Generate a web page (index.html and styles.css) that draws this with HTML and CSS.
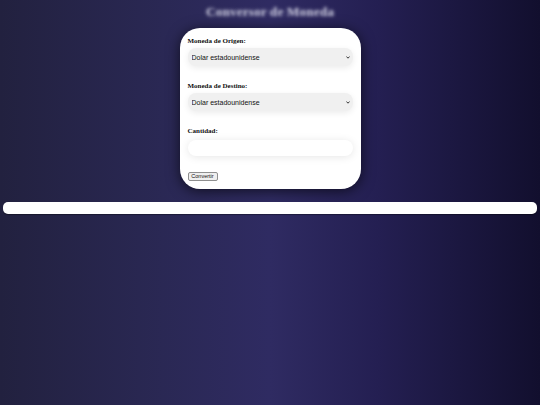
FILE: index.html
```
<!DOCTYPE html>
<html lang="es">
<head>
<meta charset="utf-8">
<title>Conversor de Moneda</title>
<link rel="stylesheet" href="styles.css">
</head>
<body>
<h1 class="title">Conversor de Moneda</h1>
<div class="card">
  <label class="label" for="origen">Moneda de Origen:</label>
  <div class="select-wrap">
    <select class="select" id="origen"><option>Dolar estadounidense</option></select>
    <svg class="chevron" width="4" height="3" viewBox="0 0 4 3"><path d="M0.4 0.5 L2 2.2 L3.6 0.5" fill="none" stroke="#222" stroke-width="0.9"/></svg>
  </div>
  <label class="label label-gap" for="destino">Moneda de Destino:</label>
  <div class="select-wrap">
    <select class="select" id="destino"><option>Dolar estadounidense</option></select>
    <svg class="chevron" width="4" height="3" viewBox="0 0 4 3"><path d="M0.4 0.5 L2 2.2 L3.6 0.5" fill="none" stroke="#222" stroke-width="0.9"/></svg>
  </div>
  <label class="label label-gap" for="cantidad">Cantidad:</label>
  <input class="input" id="cantidad" type="text">
  <button class="button" type="button">Convertir</button>
</div>
<div class="result"></div>
</body>
</html>
```
FILE: styles.css
```
html {
  min-height: 100%;
  background: linear-gradient(to right, #22213f 0%, #2a2854 30%, #2f2b62 50%, #241f52 70%, #120f2e 100%);
}
body {
  margin: 0 3px;
  min-height: 405px;
  display: flex;
  flex-direction: column;
}
.title {
  margin: 3px 0 0;
  height: 22px;
  font-family: "Liberation Serif", serif;
  font-size: 13.5px;
  font-weight: bold;
  line-height: 18px;
  text-align: center;
  color: transparent;
  text-shadow: 0 0 3.5px rgba(225, 225, 240, 0.95);
}
.card {
  align-self: center;
  width: 181px;
  box-sizing: border-box;
  margin-top: 3px;
  padding: 8px;
  background: #fff;
  border-radius: 20px;
  box-shadow: 0 2px 14px rgba(0, 0, 0, 0.65);
  display: flex;
  flex-direction: column;
  align-items: flex-start;
}
.label {
  font-family: "Liberation Serif", serif;
  font-size: 7px;
  font-weight: bold;
  line-height: 10px;
  color: #111;
}
.label-gap {
  margin-top: 15px;
}
.select-wrap {
  position: relative;
  margin-top: 2px;
  width: 165px;
  height: 18px;
}
.select {
  appearance: none;
  -webkit-appearance: none;
  display: block;
  width: 100%;
  height: 100%;
  margin: 0;
  border: none;
  border-radius: 8px;
  background: #f0f0f0;
  box-shadow: 0 2px 6px rgba(0, 0, 0, 0.08);
  font-family: "Liberation Sans", Arial, sans-serif;
  font-size: 7px;
  padding: 0 10px 0 4px;
  color: #111;
}
.chevron {
  position: absolute;
  right: 3px;
  top: 8px;
  pointer-events: none;
}
.input {
  margin-top: 4px;
  width: 165px;
  height: 16px;
  box-sizing: border-box;
  border: none;
  border-radius: 8px;
  background: #fff;
  box-shadow: 0 1px 8px rgba(0, 0, 0, 0.1);
}
.button {
  margin-top: 16px;
  width: 30px;
  height: 9px;
  padding: 0;
  border: 1px solid #8f8f8f;
  border-radius: 2px;
  background: #efefef;
  font-family: "Liberation Sans", Arial, sans-serif;
  font-size: 5.5px;
  line-height: 7px;
  color: #111;
}
.result {
  margin-top: 13px;
  height: 12px;
  background: #fff;
  border-radius: 5px;
  box-shadow: 0 1px 1px rgba(0, 0, 0, 0.35);
}
```
